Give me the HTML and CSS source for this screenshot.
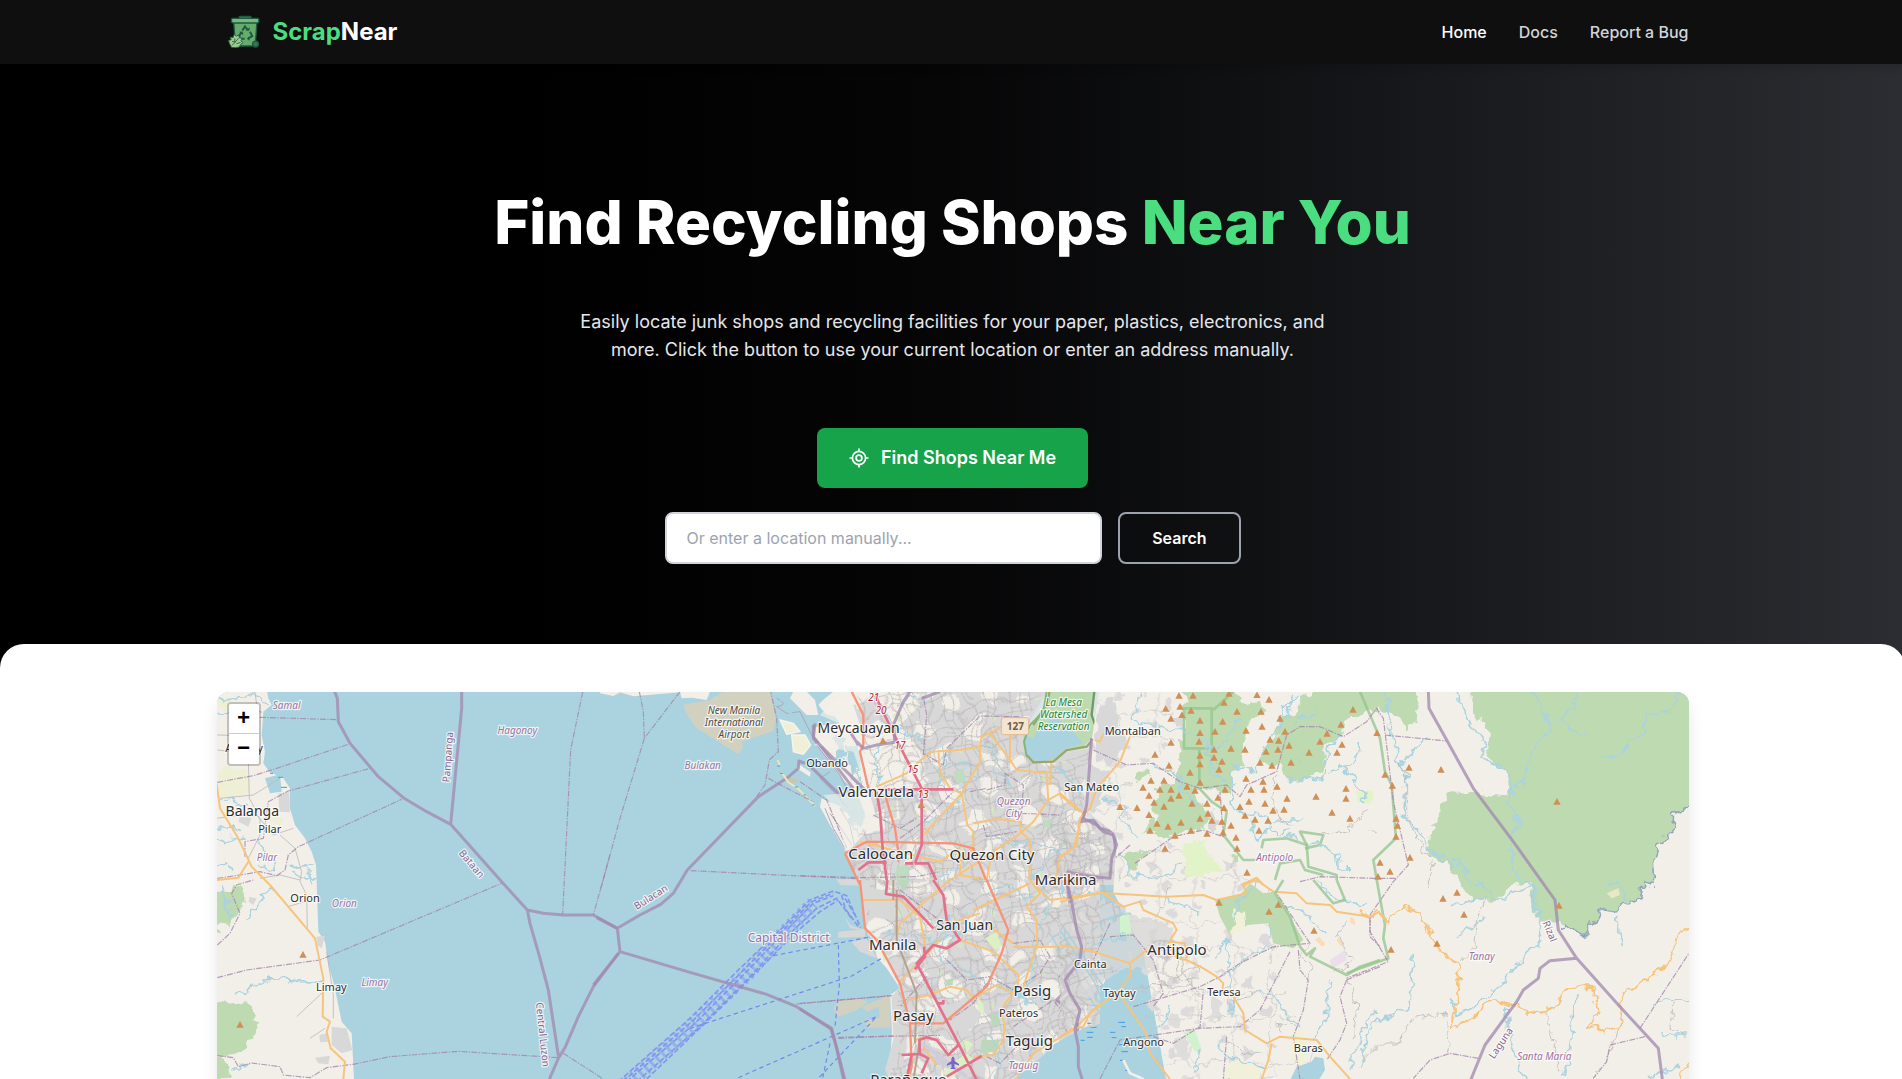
FILE: index.html
```html
<!DOCTYPE html>
<html lang="en">
<head>
<meta charset="utf-8">
<title>ScrapNear</title>
<link rel="stylesheet" href="styles.css">
</head>
<body>
<div class="page">
<header class="header">
  <div class="container header-row">
    <a class="brand">
      <svg class="brand-icon" viewBox="0 0 96 100">
        <g stroke="#1d5a3e" stroke-width="4" stroke-linejoin="round">
          <path d="M34 11V4h35v7" fill="#347a50"/>
          <path d="M17 24h70l-5 70H22z" fill="#65ac6d"/>
          <rect x="10" y="10" width="83" height="14" rx="4" fill="#78b87c"/>
          <circle cx="83" cy="88" r="9" fill="#39774e"/>
        </g>
        <g fill="none" stroke="#1d5a3e" stroke-width="6">
          <path d="M43 47l8-12 8 10M66 51l7 13-12 7M50 72H37l-4-8 7-11"/>
        </g>
        <path d="M53 47l11 1 2-11zM62 65l-5 8 9 5zM33 51l11-1 2 11z" fill="#1d5a3e"/>
        <path d="M4 86l-3-9 8-2-3-8 9 1 3-9 8 5 6-4 2 9 8 1-3 8 6 6-7 5-4 8-12 2-12-1z" fill="#9ccb8e" stroke="#285f42" stroke-width="3"/>
        <path d="M12 92l20-22M20 71v12M12 80l10 2M25 87l13-4" fill="none" stroke="#346c48" stroke-width="3"/>
      </svg>
      <span class="brand-name"><span class="accent">Scrap</span>Near</span>
    </a>
    <nav class="nav"><a class="active">Home</a><a>Docs</a><a>Report a Bug</a></nav>
  </div>
</header>
<section class="hero">
  <h1>Find Recycling Shops <span class="accent">Near You</span></h1>
  <p>Easily locate junk shops and recycling facilities for your paper, plastics, electronics, and more. Click the button to use your current location or enter an address manually.</p>
  <button class="find">
    <svg viewBox="0 0 20 20" width="20" height="20" fill="none" stroke="#fff" stroke-width="1.7"><circle cx="10" cy="10" r="6.6"/><circle cx="10" cy="10" r="2.9"/><path d="M10 .5v3.2M10 16.3v3.2M.5 10h3.2M16.3 10h3.2"/></svg>
    Find Shops Near Me
  </button>
  <form class="search"><input type="text" placeholder="Or enter a location manually..."><button type="button">Search</button></form>
</section>
<main class="content">
<div class="container">
<div class="map">
<svg class="map-canvas" viewBox="217 692 1472 408" width="1472" height="408">
<defs>
  <path id="peak" d="M0-11L11 9H-11z" fill="#d08f55"/>
  <filter id="wiggle" x="-5%" y="-5%" width="110%" height="110%" color-interpolation-filters="sRGB">
    <feTurbulence type="fractalNoise" baseFrequency=".035" numOctaves="2" seed="4"/>
    <feDisplacementMap in="SourceGraphic" scale="38" xChannelSelector="R" yChannelSelector="G"/>
  </filter>
  <filter id="bend" x="-5%" y="-5%" width="110%" height="110%" color-interpolation-filters="sRGB">
    <feTurbulence type="fractalNoise" baseFrequency=".012" numOctaves="2" seed="9"/>
    <feDisplacementMap in="SourceGraphic" scale="75" xChannelSelector="R" yChannelSelector="G"/>
  </filter>
  <pattern id="streets" width="190" height="170" patternUnits="userSpaceOnUse" patternTransform="rotate(-14)">
    <path d="M0 22L48 16 95 27 143 15 190 22M0 60L55 64 100 55 190 60M0 98L40 90 92 101 190 98M0 138L63 132 122 143 190 138M22 0L28 60 19 101 22 170M60 0L55 64 63 132 60 170M96 0L100 55 91 101 96 170M139 0L143 60 132 98 139 170M170 0L164 60 170 98 165 138 170 170M28 40L55 42M100 78H135M63 115L92 118M143 36H168M132 118L165 121M0 80H24M77 20V60M115 55V100M45 92V134M110 141V170M152 98V138" fill="none" stroke="#b9b6b6" stroke-width="2.6"/>
  </pattern>
  <pattern id="blocks" width="310" height="270" patternUnits="userSpaceOnUse">
    <path d="M20 8L60 0 74 30 50 44 22 35zM120 40L165 30 180 70 140 84 110 70zM230 10L285 20 270 60 225 50zM35 100L85 90 95 130 60 152 28 138zM190 110L240 104 260 150 210 168 178 150zM95 190L145 180 155 225 118 248 85 225zM250 200L300 194 290 240 255 250zM10 210L45 200 50 240 16 250z" fill="#f2efe9"/>
    <path d="M100 10l18 4-6 16-16-3zM272 92l20 6-8 18-16-8zM170 205l16 4-4 14-16-2z" fill="#d5e8c6"/>
  </pattern>
  <pattern id="scatter" width="230" height="210" patternUnits="userSpaceOnUse">
    <path d="M10 15l20-8 12 14-16 12zM90 45l24-5 8 24-22 9-14-10zM170 20l22 8-4 14-20-3zM30 110l28-8 10 30-26 12zM140 120l36 6-10 28-28-6zM70 180l20-8 16 12-18 16zM195 170l18 3-3 18-18-4z" fill="#dcdada"/>
    <path d="M0 80L40 70 80 90 130 75 160 100 230 80M60 0L66 60 50 110 72 160 60 210M170 0L160 60 185 120 170 210M0 160L70 150 120 170 185 150 230 160" fill="none" stroke="#c4c1c1" stroke-width="2"/>
  </pattern>
</defs>
<rect x="217" y="692" width="1472" height="408" fill="#aad3df"/>

<!-- Bataan peninsula -->
<g transform="translate(210 685) scale(.33333)">
  <path class="land" d="M0 0H168L175 40 185 60 160 80 155 150 165 200 160 235 178 260 220 280 240 310 240 370 255 420 285 460 305 500 318 540 322 650 325 740 345 770 355 840 370 890 383 950 395 1010 425 1045 432 1182H0z"/>
  <path filter="url(#wiggle)" d="M20 260L60 250 120 260 118 330 30 340zM20 30L70 40 45 68 20 65zM170 380L215 400 210 430 180 410z" fill="#eef0d5"/>
  <path class="wood" filter="url(#wiggle)" d="M0 620L60 620 65 598 100 605 104 650 88 680 60 720 0 712zM0 945L60 960 110 952 132 985 125 1010 146 1020 128 1060 100 1090 70 1110 0 1115zM0 1115L50 1120 62 1182H0zM0 720L35 740 0 760z"/>
  <path class="urban" d="M205 325L238 322 240 382 208 380zM365 1025L410 1030 427 1095 395 1105 365 1080zM328 1050L350 1045 355 1070 330 1072zM315 1118L360 1112 355 1138 325 1135zM320 755L345 752 335 790 320 780zM90 395L125 398 115 425 85 410zM118 635L140 640 130 660 116 650z"/>
  <path class="water" d="M165 280L210 268 215 320 180 325z"/>
  <path class="river" filter="url(#wiggle)" d="M22 38Q60 50 90 38T150 40L175 60M22 90L60 78 150 75M22 350L60 340 80 360 115 350M22 430L60 425 90 440M22 470L70 460 110 470M150 460L160 500 150 540 190 560 185 520M22 540L50 530 65 560M35 600L50 640 60 710M240 550L315 535M250 565L318 590M285 545L305 600M100 710L135 680 160 640 150 620 200 620M72 930L110 915 160 885 225 880 270 890 345 892M70 1155L120 1135"/>
  <path class="street" d="M22 150L110 152 115 230 118 340 140 380M22 195L70 200 110 220M120 35L135 20 140 60M30 340L130 330 210 280M115 520L150 450 150 400 120 370M210 450L255 490 275 560 270 590 290 630 292 730M150 580L210 570 270 585M260 995L340 920M300 1060L345 1030M350 800L370 930 370 1000M235 665L300 645M140 390L190 450 250 430M20 400L90 390 150 395"/>
  <path class="muni" d="M22 292L130 272 200 250 415 178M150 97L385 104M105 515L105 470 160 460 175 350 235 318 480 250M22 580L90 570 150 560 200 572 225 555 235 510 265 485 575 343M22 780L60 745 90 685 65 625 80 600 130 585M22 878L110 855 330 825 875 595M22 1112L70 1118 85 1145 125 1134 210 1145 220 1170 300 1178 350 1148 430 1138 540 1115 745 1099 1045 1118M1118 21L1082 195 1058 688M1200 510L1150 690M1060 1105L1180 1182"/>
  <path class="secondary" d="M20 295L30 370 85 460 125 545 180 600 315 760 340 880 338 995 360 1010 350 1040 362 1090 405 1130 400 1182M20 585L85 578 115 530"/>
  <path class="region" d="M372 15L382 40 385 110 420 175 505 275 580 338 650 380 722 418 875 590 952 675M755 15L755 70 722 418M952 675L1000 685 1060 690 1150 690 1222 730M952 675L960 715 990 820 1015 915 1046 1118 1015 1190M1046 1118L1065 1088 1105 995 1150 905 1225 805"/>
  <path class="marsh" d="M180 265h9M204 277h15M213 307h18"/>
  <use href="#peak" x="279" y="809"/><use href="#peak" x="90" y="1019"/>
</g>

<!-- Manila Bay shore -->
<g transform="translate(600 685) scale(.33333)">
  <path class="land" d="M0 0V25L40 33 60 22 100 34 240 22 245 40 275 38 320 45 330 20H700L650 60 665 85 705 95 720 115 675 120 640 128 635 160 690 230 735 290 770 320 800 400 790 440 740 370 710 360 665 340 660 365 690 420 735 495 775 560 790 640 795 720 820 760 830 815 860 850 900 910 870 930 876 1040 870 1130 890 1182H960V0z"/>
  <path d="M248 60L330 45 370 20H512L530 90 520 138 425 170 430 185 415 208 290 130 262 90z" fill="#d2d1c0"/>
  <path d="M700 970L720 945 770 940 805 950 770 975 715 995zM785 965L870 930 872 1028H800L795 1003 840 998 835 965 800 980z" fill="#d2d1c0"/>
  <path class="water" d="M512 20L690 20 655 60 680 90 640 125 630 180 690 245 735 320 690 345 640 280 625 240 590 225 540 220 530 100z"/>
  <path d="M540 105L580 115 600 140 560 148zM575 150L615 150 632 180 610 208 580 200z" fill="#f0f0d8" stroke="#f7f5ec" stroke-width="4"/>
  <path class="land" d="M580 20L620 20 645 45 655 90 620 90 570 40zM600 240L632 262 630 275 590 250z"/>
  <path d="M560 275L600 285 575 298z" fill="#c9c6a9"/>
  <path class="water" filter="url(#wiggle)" d="M740 180L775 175 785 240 760 270 745 230zM700 150L730 170 740 250 715 240zM720 300L755 360 770 420 750 400 710 330zM770 350L790 380 800 430 780 420z"/>
  <path class="shore" d="M530 40Q570 60 530 65L560 85 600 80 620 120 650 180 720 270 750 330M690 260L660 280 710 330 770 400M675 370L700 430 740 500 770 540M690 385L730 440 755 480M720 370L750 420 765 490"/>
  <path class="urban" d="M708 583L780 582 778 602 722 600zM732 690L750 720 790 735 750 730zM715 740L795 732 795 755 715 758zM755 772L800 760 830 820 780 800z"/>
  <path class="river" filter="url(#wiggle)" d="M700 160L740 210 760 280 790 320M720 290L745 380 760 400M760 240L800 340M735 340L780 420M740 380L790 470M800 90L790 200M840 30L800 60M515 30L560 48 575 90"/>
  <path class="muni" d="M118 20L130 80 133 160 240 20M133 160L60 400 0 620M470 335L495 300 508 225 535 200 530 100 512 20M600 290L680 345 740 490M272 557L785 582M590 957L900 930M715 1060L890 1052"/>
  <path class="ferry" d="M520 812L830 752M270 1030L755 873 845 820M715 780L718 900 705 1025M415 1178L830 995 655 1180M690 1075L668 1178"/>
  <g class="bundle">
    <path class="wake" d="M85 1195L290 1010 440 870 550 745 640 655"/>
    <path d="M55 1190L270 1000 410 860 540 735 630 645 700 618 740 632 782 728"/>
    <path d="M68 1190L280 1006 420 866 545 740 635 650 700 625"/>
    <path d="M80 1190L290 1010 430 870 550 745 640 655 700 632"/>
    <path d="M110 1190L300 1025 450 875 570 745 650 670 710 640 755 700"/>
    <path d="M140 1182L320 1010 470 860 590 740 660 680 715 645"/>
    <path d="M725 630L735 670 775 725M735 640L765 690"/>
  </g>
  <path class="region" d="M-10 698L52 730 60 800 -20 900M52 730L120 690 182 658 220 625 262 555 475 335 560 280 595 250 597 228 615 235M60 800L270 862 500 928 590 965 693 1032 710 1090 732 1190M640 120L640 155 760 310M632 245L725 335"/>
  <path d="M533 225l8 20M545 262l20 30 30 20 40 40 10 12" fill="none" stroke="#e6e8b8" stroke-width="6"/>
  <path class="marsh" d="M532 243h10M540 265h10M584 306h10M610 330h8M636 360h8"/>
</g>

<!-- Metro Manila north -->
<g transform="translate(800 685) scale(.33333)">
  <path class="land" d="M130 20H940V600H180L140 520 120 430 100 360 70 330 200 320 160 200 40 180 150 130 60 90z" opacity=".65"/>
  <path class="urban" d="M400 20H740L700 90 670 150 680 200 720 235 800 200 880 190 890 340 860 400 940 410 960 600H190L135 510 180 460 220 420 300 400 290 330 360 300 370 210 300 120 340 80z"/>
  <path class="urban" d="M160 60L240 40 280 120 230 180 190 150zM210 330L290 310 290 400 230 400z"/>
  <path fill="url(#blocks)" filter="url(#bend)" d="M160 20H740L670 150 720 235 880 190 890 340 960 600H190L200 300z"/>
  <path fill="url(#streets)" filter="url(#bend)" d="M175 -20H740L670 150 720 235 880 190 890 340 860 400 940 410 960 620H190L145 510 210 420 200 200z"/>
  <path class="wood" d="M745 20H885L875 90 885 150 850 185 800 190 760 225 690 225 670 180 700 110 735 80z"/>
  <path class="water" d="M740 120L760 90 810 130 850 175 800 190 760 225 700 235 675 200 670 150 700 160 720 120z"/>
  <path d="M460 260L490 250 498 290 470 295zM290 545L325 540 330 575 310 600 285 590zM730 405h22v22h-22z" fill="#bfdcc2"/>
  <path class="river" filter="url(#wiggle)" d="M290 70L340 35 380 50M240 180L220 240 250 300M430 180L440 240 480 230 520 260 540 290M560 170L590 220 580 260M370 420L440 380 480 340M400 590L460 550 470 500M700 580L760 500 800 480M150 560L90 430M230 30L250 80 290 130 370 160M560 440L640 480 700 470 780 500M640 300L590 260M760 240L800 270 840 330M450 200L410 260 430 300 480 320"/>
  <path class="muni" d="M370 210L380 90 370 35M370 205L430 240 440 190 540 93 660 95 690 110M560 315L615 300 615 265 670 300 665 385 780 390M510 320L560 310M300 460L370 410 460 320M0 572L180 578 350 575 420 560M550 420L560 455 650 440M-95 280L-20 320 40 350M220 390L300 430 350 400"/>
  <path class="secondary" d="M230 305L320 265 390 200 480 195 540 185 545 155 600 130M415 195L420 260 450 310 485 325 540 230 540 185M485 325L370 450M485 325L502 420 520 440 520 500M570 145L630 225 650 255 740 265 745 345 700 410 655 450 580 500M630 130V235M520 415L590 402 660 410 662 440 690 465 688 600M745 345L780 325 850 385 820 490 780 515 765 600M520 490L480 530 480 570 560 585 570 530M430 600L520 540 600 500M750 300L755 220M180 470L300 500 420 530 480 490"/>
  <path class="trunk" d="M155 20L190 90 190 180 180 200 205 310M255 330L285 430 295 500 295 530M135 505L200 470 460 475 520 490 560 590M135 505L180 600"/>
  <path class="motorway" d="M225 30L290 165 365 310 365 480 345 535M235 313L460 313M230 320L240 380 248 490 262 600M345 535L385 535 415 600M175 555L205 532 260 532M340 535L315 535"/>
  <path class="region" d="M45 115L40 160 200 320M170 170L190 190 230 180 285 172 280 120 310 50 330 20M365 40L420 20M150 140L175 180M875 160L860 370 840 410 880 405 900 430 940 440 960 600"/>
  <path d="M748 20L745 50 700 120M680 210L700 232 760 230 800 195 860 185 885 155" fill="none" stroke="#9aa86b" stroke-width="7"/>
  <path d="M740 20L730 80 690 120 672 170 680 215" fill="none" stroke="#7fb879" stroke-width="6"/>
  <path d="M883 20L875 90 890 135" fill="none" stroke="#6f9a6a" stroke-width="7"/>
  <use href="#peak" x="249" y="168"/><use href="#peak" x="364" y="360"/>
  <rect x="604" y="98" width="82" height="51" rx="7" fill="#f5e5d0" stroke="#ddb98f" stroke-width="3"/>
</g>

<!-- Metro Manila south -->
<g transform="translate(800 880) scale(.33333)">
  <path class="urban" d="M180 0L190 130 240 200 300 320 275 350 280 480 255 570 300 660H640L700 550 800 470 900 430V0z"/>
  <path fill="url(#blocks)" filter="url(#bend)" d="M200 0L210 130 260 200 315 320 295 350 300 480 280 570 320 660H640L700 550 800 460 900 420V0z"/>
  <path fill="url(#streets)" filter="url(#bend)" d="M200 0L210 130 260 200 315 320 295 350 300 480 280 570 320 660H640L690 540 800 455 900 415V0z"/>
  <path class="urban" d="M415 380L500 360 545 400 520 445 450 455 410 430zM200 20L290 40 280 120 210 110z"/>
  <path d="M555 175L590 155 605 200 585 210zM530 350L550 370 552 400 535 390zM490 480L520 490 500 520zM470 540L500 520 520 540 460 590 425 580zM245 215L270 230 250 245z" fill="#dcf0c4"/>
  <path d="M290 0L330 0 310 35zM435 300L460 295 458 315 438 318zM572 400L600 400 598 435 575 440zM545 480L600 480 590 515 540 520z" fill="#bcd8bc"/>
  <path d="M365 490L500 590M350 510L450 560" stroke="#cfcddb" stroke-width="12"/>
  <path class="river" filter="url(#wiggle)" d="M430 60L450 130 480 160 400 190 380 210M250 160L330 165 400 180 440 170 410 230 490 270 560 310 640 330 700 380M730 0L740 100 700 200 700 280 680 320 740 360M560 40L620 10 700 60M540 450L600 500 590 597M780 0L800 60 830 100M860 30L900 70"/>
  <path class="river" d="M750 160L800 250 900 400M775 160L900 370"/>
  <path class="muni" d="M300 30L430 130M640 190L720 180 750 230 720 280 640 330 570 290 500 300 430 230M560 310L520 370 450 420M640 440L760 360 790 400 800 460M380 290L300 380M0 370L270 347M115 472L420 466M560 530L600 550 650 500"/>
  <path class="secondary" d="M190 60H300L360 110 375 200M450 0L300 130 290 170M540 100L450 130 480 180 580 215 655 285 655 320M520 90L690 10M690 0L720 40 680 80 710 120 712 195 670 320M640 200L820 200 900 215M325 360L390 345 450 320 500 330 520 355 590 315 640 340 615 370 600 400 615 430 610 480 580 525 520 530M750 60L900 40M710 20L750 60M820 450L750 490 700 520 650 597M820 450L900 370M380 470L345 480M300 305L420 180M370 500L410 555M570 140L640 190"/>
  <path class="trunk" d="M180 0L195 145 230 180 300 310 330 430 335 560 325 600M560 0L625 150 605 220 560 320 430 430 330 430"/>
  <path d="M290 30V180L350 340 345 490M280 0V60M340 600L360 480" fill="none" stroke="#b4a28f" stroke-width="6"/>
  <path class="motorway" d="M262 0L258 42 310 50 400 145M400 0L430 45 440 120 480 180 440 205 400 195 350 250 480 500 530 600M345 268L375 230 372 200M305 525L360 522 385 535 365 580M360 525L358 480 380 472 410 480 445 525 475 495M440 590L545 528M410 370H430V360M320 597L335 525"/>
  <path class="region" d="M800 0L815 110 845 170 840 220 780 290 800 330 770 360 830 410 835 480 830 560 850 620M0 387L95 445 135 600"/>
  <path d="M459 530c5 0 5 8 5 13l13 9v5l-13-5-1 10 5 5h-18l5-5-1-10-13 5v-5l13-9c0-5 0-13 5-13z" fill="#7b68c4"/>
</g>

<!-- Rizal highlands -->
<g transform="translate(1060 685) scale(.33333)">
  <path class="land" d="M120 0H2000V1250H330L250 800 160 620 170 450 70 370 90 200z"/>
  <path fill="url(#scatter)" filter="url(#wiggle)" d="M120 20H330L360 160 230 260 200 440 330 480 520 520 640 620 660 900 800 1180H250L180 640 170 450 70 370 90 200z"/>
  <path class="urban" filter="url(#wiggle)" d="M115 60L160 30 170 100 200 180 160 240 100 230zM80 240L150 260 110 380 70 380zM340 100L370 100 370 130 345 120zM430 380L460 375 480 420 450 440z"/>
  <path fill="url(#streets)" filter="url(#bend)" d="M-20 400L130 430 160 450 170 480 150 580 0 600z"/>
  <g filter="url(#wiggle)">
    <path class="wood" d="M372 0H510L555 60 600 45 610 90 570 110 550 190 555 240 520 250 510 330 480 320 440 305 400 320 445 390 430 430 340 445 330 470 285 445 250 445 290 395 270 360 300 340 280 310 350 295 360 190 375 120z"/>
    <path class="wood" d="M780 0H950L955 90 930 75 850 110 840 155 790 190 795 250 720 290 680 280 665 240 630 245 600 225 605 190 650 160 660 100 700 95 720 50z"/>
    <path class="wood" d="M980 0H1080L1070 100 1040 140 1020 90 980 90 950 60 900 0zM225 275L265 250 270 275 230 285zM180 510L270 490 220 560zM515 510L535 512 530 540 515 535zM1225 0H1910L1900 350 1870 370 1840 390 1840 440 1790 480 1780 540 1785 600 1750 590 1740 650 1690 650 1660 680 1620 670 1605 710 1570 750 1540 730 1515 720 1430 700 1410 590 1360 600 1300 650 1240 650 1200 590 1160 530 1100 510 1125 400 1160 330 1230 320 1345 335 1350 270 1280 210 1290 140 1240 80z"/>
  </g>
  <path filter="url(#wiggle)" d="M365 490L400 460 440 470 430 500 500 560 440 555 430 580 375 580 380 540zM880 325L940 320 930 350 900 350z" fill="#e2f3c8"/>
  <path d="M372 70H455V190H372zM418 190V300M418 310L455 350 500 380 490 450 550 525 590 525M520 20L460 75M605 490L610 465 680 460 740 480 720 440 790 450 780 480 735 490M900 20L960 160 975 260 995 300 1008 460 940 525 960 640 975 720 970 760 985 820 860 865" class="park"/>
  <path class="river" filter="url(#wiggle)" d="M300 130L360 130 430 170 470 200 545 90M440 160L455 230 490 290 530 300M510 240L590 260 600 210 680 100 700 20M515 260L520 360 545 380 590 390 620 400 640 420 590 470 570 410M640 405H730M690 430L650 450 630 420M795 255L780 285 740 275 715 295 680 280M795 250L800 200 850 140M810 265L840 250 870 265 900 300 915 355M835 255L880 240 900 190 905 170M730 470L790 480 830 510 835 550 870 548M680 450L720 465M280 240L340 260 370 290 360 320 420 360M240 20L220 100 290 130 290 110M130 340L200 370 180 400 240 460M170 500L210 540 200 570 270 580 330 570 360 530M480 280L450 270 455 220M660 130L670 60 720 40M700 110L770 80M710 210L725 240M975 20L985 120 1010 180 1010 230 1040 270 1030 400 1080 440 1110 500 1180 540 1190 515 1230 590 1290 610 1300 650 1380 615 1420 600 1430 680 1450 760 1400 800 1370 840 1330 890 1240 970 1190 985 1170 940M1190 20L1220 100 1280 180 1260 220 1300 230 1350 270 1360 320 1345 360 1380 420 1350 460 1360 560 1400 590 1430 620M1420 20L1470 130 1410 210 1390 290 1350 320M1550 20L1540 70 1500 100 1560 150 1590 152M1860 20L1820 80 1760 90 1755 150 1710 160 1680 215 1630 210M1020 240L1100 155M1170 665L1280 640M1190 755L1270 700M1640 590L1690 610 1695 640M1670 690L1690 780M1060 810L1050 960 1010 990 940 1010 920 1060 900 1150M1560 935L1540 960 1530 1080 1510 1180M1340 970L1350 1080 1400 1180M1780 960L1840 940 1890 960M1800 1050L1880 1050M1760 1180L1860 1140"/>
  <path class="street" filter="url(#wiggle)" d="M650 260L640 360 660 400 700 420M790 450L870 430 920 370M440 200L480 230M920 435L950 440M1015 230L1040 290 1040 400 1100 510 1120 520 1100 610M1280 640L1250 700 1240 790 1200 830M900 1130L950 1080 1010 1080 1060 1000 1150 985 1170 1110M1500 950L1460 980 1480 1060 1500 1160M1680 1000L1660 1080 1600 1180M1840 950L1830 1030 1880 1060"/>
  <path class="muni" d="M100 195L200 240 280 235 360 290 420 310 500 300 540 335 560 300 650 260 680 150 720 125 780 125 850 155 920 110 950 70 970 100 1000 350 1045 540 1000 590 930 690 930 740 985 830 860 880M975 150L1160 168M225 535L340 455 430 435 490 455 480 320M720 590L780 575 940 580 1010 580M1740 1030L1890 800M1755 1055L1650 1080 1640 1130 1600 1180M1255 1120L1170 1105 1110 1125 1060 1180M210 480L165 520"/>
  <path filter="url(#wiggle)" d="M1900 340L1870 370 1840 390 1840 440 1790 480 1780 540 1785 600 1750 590 1740 650 1690 650 1660 680 1620 670 1605 710 1570 750 1540 730 1515 720 1495 735" fill="none" stroke="#92a5bd" stroke-width="5"/>
  <path class="secondary" d="M210 155L180 230 110 310 90 370 60 400 50 480 0 520M105 165L120 170 130 145M0 330L60 380M545 600L590 578 610 600"/>
  <path class="secondary" filter="url(#wiggle)" d="M900 680L920 695 960 680 980 710 1030 665 1075 685 1110 740 1145 800 1190 835 1200 900 1170 1030 1230 1010 1290 950 1370 960 1410 990 1480 970 1520 910 1600 905 1610 980 1590 1020 1640 1040 1680 1020 1690 930 1750 890 1830 830 1850 750 1900 725M1900 1130L1860 1160 1870 1190"/>
  <path class="region" d="M1105 15L1107 70 1160 165 1240 310 1360 470 1485 645 1495 735 1550 820 1680 965 1795 1090 1808 1190M1550 820L1470 827 1440 850 1435 880 1390 915 1370 950 1275 1080 1230 1190M95 160L80 360 70 400 110 420 130 440 160 450 170 480 155 520 150 580 100 575 20 560"/>
  <path d="M1640 625L1675 610 1680 630 1655 640z" fill="#e8e8c8"/>
  <g>
    <use href="#peak" x="357" y="32"/><use href="#peak" x="399" y="32"/><use href="#peak" x="507" y="26"/><use href="#peak" x="591" y="30"/><use href="#peak" x="627" y="44"/><use href="#peak" x="492" y="53"/><use href="#peak" x="317" y="71"/><use href="#peak" x="360" y="65"/><use href="#peak" x="393" y="77"/><use href="#peak" x="366" y="90"/><use href="#peak" x="333" y="101"/><use href="#peak" x="531" y="80"/><use href="#peak" x="603" y="80"/><use href="#peak" x="879" y="74"/><use href="#peak" x="420" y="107"/><use href="#peak" x="488" y="110"/><use href="#peak" x="660" y="101"/><use href="#peak" x="606" y="125"/><use href="#peak" x="843" y="119"/><use href="#peak" x="420" y="144"/><use href="#peak" x="465" y="140"/><use href="#peak" x="558" y="137"/><use href="#peak" x="675" y="140"/><use href="#peak" x="801" y="146"/><use href="#peak" x="951" y="144"/><use href="#peak" x="333" y="173"/><use href="#peak" x="417" y="170"/><use href="#peak" x="630" y="164"/><use href="#peak" x="656" y="167"/><use href="#peak" x="687" y="182"/><use href="#peak" x="780" y="170"/><use href="#peak" x="846" y="179"/><use href="#peak" x="285" y="209"/><use href="#peak" x="420" y="212"/><use href="#peak" x="462" y="194"/><use href="#peak" x="513" y="191"/><use href="#peak" x="555" y="194"/><use href="#peak" x="618" y="200"/><use href="#peak" x="654" y="194"/><use href="#peak" x="747" y="203"/><use href="#peak" x="831" y="203"/><use href="#peak" x="327" y="242"/><use href="#peak" x="420" y="238"/><use href="#peak" x="462" y="218"/><use href="#peak" x="486" y="230"/><use href="#peak" x="600" y="233"/><use href="#peak" x="636" y="242"/><use href="#peak" x="693" y="233"/><use href="#peak" x="390" y="263"/><use href="#peak" x="477" y="254"/><use href="#peak" x="273" y="287"/><use href="#peak" x="312" y="287"/><use href="#peak" x="420" y="293"/><use href="#peak" x="558" y="281"/><use href="#peak" x="609" y="290"/><use href="#peak" x="249" y="308"/><use href="#peak" x="300" y="314"/><use href="#peak" x="333" y="314"/><use href="#peak" x="381" y="305"/><use href="#peak" x="405" y="317"/><use href="#peak" x="495" y="314"/><use href="#peak" x="573" y="314"/><use href="#peak" x="612" y="314"/><use href="#peak" x="651" y="305"/><use href="#peak" x="858" y="311"/><use href="#peak" x="267" y="332"/><use href="#peak" x="333" y="341"/><use href="#peak" x="357" y="332"/><use href="#peak" x="474" y="338"/><use href="#peak" x="681" y="341"/><use href="#peak" x="768" y="335"/><use href="#peak" x="858" y="341"/><use href="#peak" x="180" y="366"/><use href="#peak" x="231" y="369"/><use href="#peak" x="282" y="353"/><use href="#peak" x="312" y="365"/><use href="#peak" x="396" y="356"/><use href="#peak" x="441" y="356"/><use href="#peak" x="567" y="350"/><use href="#peak" x="615" y="356"/><use href="#peak" x="492" y="369"/><use href="#peak" x="540" y="366"/><use href="#peak" x="639" y="377"/><use href="#peak" x="672" y="374"/><use href="#peak" x="816" y="383"/><use href="#peak" x="267" y="390"/><use href="#peak" x="444" y="386"/><use href="#peak" x="555" y="392"/><use href="#peak" x="870" y="401"/><use href="#peak" x="291" y="416"/><use href="#peak" x="324" y="425"/><use href="#peak" x="363" y="413"/><use href="#peak" x="420" y="401"/><use href="#peak" x="456" y="407"/><use href="#peak" x="486" y="410"/><use href="#peak" x="585" y="404"/><use href="#peak" x="624" y="407"/><use href="#peak" x="513" y="422"/><use href="#peak" x="270" y="437"/><use href="#peak" x="345" y="452"/><use href="#peak" x="393" y="437"/><use href="#peak" x="441" y="446"/><use href="#peak" x="489" y="443"/><use href="#peak" x="528" y="458"/><use href="#peak" x="597" y="437"/><use href="#peak" x="315" y="491"/><use href="#peak" x="531" y="491"/><use href="#peak" x="561" y="563"/>
    <use href="#peak" x="975" y="269"/><use href="#peak" x="997" y="302"/><use href="#peak" x="1008" y="401"/><use href="#peak" x="1012" y="422"/><use href="#peak" x="1008" y="455"/><use href="#peak" x="960" y="533"/><use href="#peak" x="990" y="560"/><use href="#peak" x="954" y="575"/><use href="#peak" x="1050" y="518"/><use href="#peak" x="1047" y="248"/><use href="#peak" x="1143" y="254"/><use href="#peak" x="1491" y="350"/><use href="#peak" x="1497" y="662"/><use href="#peak" x="1191" y="623"/><use href="#peak" x="1149" y="641"/><use href="#peak" x="1212" y="689"/><use href="#peak" x="1131" y="776"/><use href="#peak" x="993" y="794"/>
  </g>
</g>

<!-- Antipolo and Laguna Lake -->
<g transform="translate(1060 880) scale(.33333)">
  <path class="urban" filter="url(#wiggle)" d="M0 70L120 50 220 100 340 140 330 220 280 230 300 280 200 260 100 320 60 420 0 460zM330 400L365 410 360 440 325 430zM450 350L490 370 475 420 455 410zM340 480L385 470 385 540 345 530z" opacity=".75"/>
  <path fill="url(#streets)" filter="url(#bend)" d="M0 70L120 50 200 90 130 160 120 240 200 260 100 320 60 420 0 460zM250 200L330 170 420 260 400 330 340 300 280 230z"/>
  <path class="wood" d="M465 60L540 45 570 10 610 40 640 35 690 110 730 180 700 205 640 190 625 130 560 135 510 165 480 110z"/>
  <path d="M180 110L205 95 215 160 180 165zM370 455L405 450 425 510 405 515z" fill="#d0f2cd"/>
  <path filter="url(#wiggle)" d="M520 95L555 85 560 150 520 160zM500 560L560 540 620 560 600 600H490zM690 460L720 450 750 520 720 560 700 530z" fill="#f0f1d8"/>
  <path d="M810 240L855 210 860 240 815 268z" fill="#eadfea"/>
  <path d="M765 180l12-10 20 22-10 8zM835 170l18 20-8 10-15-18zM870 110l12 5 4 20-14-5z" fill="#fbdcb5"/>
  <path class="water" d="M-150 660L-120 580 -60 550 -30 500 30 465 80 440 130 440 170 490 200 500 240 520 270 530 330 610 340 660zM690 600L710 560 755 545 765 530 790 535 795 570 770 610z"/>
  <path class="river" d="M0 150L100 300 180 480M10 140L150 350 200 500"/>
  <path class="river" filter="url(#wiggle)" d="M100 150L130 120 220 100M90 190L200 170M320 60L410 95M470 230L500 170 510 290 510 400 530 350M520 270L560 230 640 200M590 10L540 60 520 140M680 80L740 100 790 150M630 120V170M770 0L830 60 920 70M600 330L650 350 690 420 720 440M810 300L800 350 800 420 760 480M960 400H930L910 450 870 560M280 460L320 420 330 370M490 470L470 500 520 540 620 560M400 590L420 510"/>
  <path class="street" filter="url(#wiggle)" d="M330 20L310 80 290 110M350 230L360 290 420 340M600 330L570 350 520 360M760 190L720 230 760 260 740 300M860 120L830 170 880 240 830 280M860 300L890 380 880 480M700 440L650 430 670 460M500 480L560 520 610 520M180 340L220 330 290 310 440 330"/>
  <path class="muni" d="M150 170L220 165 280 240 310 340 280 380M220 380L420 320 480 290 540 250 640 200 750 190 650 40M690 215L600 390 540 440 420 445 430 330M715 210L720 270 745 300 730 390 700 470 720 597M860 300L840 350 860 430 840 480 800 540M960 260L860 300M120 597L180 480 420 445M280 470L340 490 420 440M500 470L490 597M150 130L100 240M930 110L930 170 960 200"/>
  <path class="secondary" d="M0 65L120 38 320 50 430 45 470 60 560 40 550 15 590 0 640 35 710 40 740 70 810 75 830 95 930 110 960 95M130 40L190 80 240 65 250 90 340 130 350 150 325 190 350 235 380 240 430 265 470 290 490 310 485 340M0 195L100 215 210 250 212 285 180 330 90 400 70 440 40 445 0 470M210 250L260 210M180 345L260 460 270 520 330 597M330 185L375 190 380 235M520 350L550 400 555 450 620 490 660 470 770 480 810 530 870 597M635 490L625 540 605 597"/>
  <path class="park" d="M830 0L855 60 820 70 760 0M670 0L645 40 690 110 720 200 740 225 765 205 750 230 860 285 900 260 960 240M645 0L660 -50 720 -60 735 -30 790 -15 M740 -110L745 -40 830 -15V0"/>
  <path class="region" d="M20 0L35 65 50 150 65 200 60 240 15 300 30 340 60 390 45 450 55 500 55 560 70 610"/>
  <path class="marsh" d="M82 430h12M92 442h18M80 457h20M82 472h16M62 481h12M175 427h20M184 440h14M150 457h16M155 473h14M176 494h12M184 515h20M180 541h12M196 571h14"/>
  <path d="M190 540l20 40 40 17" fill="none" stroke="#f2efe9" stroke-width="8"/>
  <use href="#peak" x="477" y="68"/><use href="#peak" x="655" y="74"/><use href="#peak" x="627" y="95"/><use href="#peak" x="762" y="152"/>
</g>

<g class="labels" transform="translate(210 685) scale(.33333)">
  <g class="admin"><text x="230" y="73">Samal</text><text x="922" y="146">Hagonoy</text><text x="171" y="529">Pilar</text><text x="403" y="666">Orion</text><text x="494" y="902">Limay</text></g>
  <g class="adminline"><text transform="translate(724 217) rotate(-86)">Pampanga</text><text transform="translate(777 543) rotate(50)">Bataan</text><text transform="translate(988 1050) rotate(84)">Central Luzon</text></g>
  <text class="small" x="102" y="202">Abucay</text><text class="town" x="127" y="393">Balanga</text><text class="small" x="179" y="445">Pilar</text><text class="small" x="285" y="651">Orion</text><text class="small" x="364" y="917">Limay</text>
</g>
<g class="labels" transform="translate(600 685) scale(.33333)">
  <g class="airport"><text x="402" y="87">New Manila</text><text x="402" y="123">International</text><text x="402" y="159">Airport</text></g>
  <text class="adm" x="308" y="251">Bulakan</text><text class="district" x="566" y="771">Capital District</text>
  <g class="adminline"><text transform="translate(158 645) rotate(-32)">Bulacan</text></g>
  <text class="town" x="776" y="144">Meycauayan</text><text class="small" x="681" y="245">Obando</text>
</g>
<g class="labels" transform="translate(800 685) scale(.33333)">
  <g class="exit"><text x="221" y="48">21</text><text x="243" y="88">20</text><text x="300" y="192">17</text><text x="338" y="265">15</text><text x="369" y="339">13</text></g>
  <g class="reserve"><text x="791" y="63">La Mesa</text><text x="791" y="99">Watershed</text><text x="791" y="135">Reservation</text></g>
  <g class="adm"><text x="641" y="360">Quezon</text><text x="641" y="396">City</text></g>
  <text class="shield" x="646" y="134">127</text>
  <text class="city" x="229" y="337">Valenzuela</text><text class="city" x="242" y="521">Caloocan</text><text class="city" x="576" y="524">Quezon City</text><text class="city" x="797" y="600">Marikina</text>
</g>
<g class="labels" transform="translate(800 880) scale(.33333)">
  <text class="town" x="494" y="150">San Juan</text><text class="city" x="278" y="209">Manila</text><text class="city" x="697" y="347">Pasig</text><text class="small" x="656" y="411">Pateros</text><text class="city" x="340" y="422">Pasay</text><text class="city" x="688" y="499">Taguig</text><text class="adm" x="670" y="567">Taguig</text><text class="city" x="325" y="614">Parañaque</text>
</g>
<g class="labels" transform="translate(1060 685) scale(.33333)">
  <text class="small" x="218" y="150">Montalban</text><text class="small" x="95" y="318">San Mateo</text><text class="adm" x="644" y="528">Antipolo</text><text class="adm" x="1265" y="824">Tanay</text><text class="adm" x="1453" y="1125">Santa Maria</text>
  <g class="adminline"><text transform="translate(1460 743) rotate(68)">Rizal</text><text transform="translate(1331 1080) rotate(-56)">Laguna</text></g>
</g>
<g class="labels" transform="translate(1060 880) scale(.33333)">
  <text class="city" x="351" y="226">Antipolo</text><text class="small" x="91" y="263">Cainta</text><text class="small" x="178" y="350">Taytay</text><text class="small" x="492" y="348">Teresa</text><text class="small" x="251" y="498">Angono</text><text class="small" x="745" y="515">Baras</text>
</g>
</svg>
<div class="zoom"><button type="button">+</button><button type="button">−</button></div>
</div>
</div>
</main>
</div>
</body>
</html>
```
FILE: styles.css
```css
* { box-sizing: border-box; }
html, body { margin: 0; height: 100%; overflow: hidden; }
body { font-family: Inter, sans-serif; font-size: 16px; line-height: 24px; background: #fff; }
.page { width: 1905px; height: 100%; overflow: hidden; background: linear-gradient(to right, #000 0%, #000 28%, #060607 50%, #111214 67%, #2b2d32 100%); }
.container { width: 1536px; margin: 0 auto; padding: 0 32px; }
.accent { color: #4ade80; }
button, input { font: inherit; }

.header { height: 64px; background: #0f0f0f; box-shadow: 0 4px 6px rgba(0, 0, 0, .12); position: relative; }
.header-row { display: flex; justify-content: space-between; align-items: center; height: 64px; }
.brand { display: flex; align-items: center; gap: 13px; padding-left: 11px; }
.brand-icon { width: 32px; height: 33px; margin-top: -2px; }
.brand-name { color: #fff; font-size: 24px; font-weight: 700; line-height: 32px; }
.nav { display: flex; gap: 32px; font-weight: 500; color: #d1d5db; }
.nav .active { color: #fff; }

.hero { height: 580px; padding-top: 128px; display: flex; flex-direction: column; align-items: center; text-align: center; color: #fff; }
.hero h1 { margin: 0; font-size: 60px; line-height: 60px; font-weight: 800; }
.hero p { margin: 56px 0 0; width: 768px; font-size: 18px; line-height: 28px; color: #e5e7eb; }
.find { margin-top: 64px; height: 60px; padding: 0 32px; border: 0; border-radius: 8px; background: #16a34a; color: #fff; font-size: 18px; font-weight: 600; display: flex; align-items: center; gap: 12px; }
.search { margin: 24px 0 0; width: 576px; display: flex; gap: 16px; }
.search input { flex: 1; min-width: 0; height: 52px; padding: 0 20px; border: 2px solid #d1d5db; border-radius: 8px; background: #fff; }
.search input::placeholder { color: #9ca3af; opacity: 1; }
.search button { height: 52px; padding: 0 32px; border: 2px solid #9ca3af; border-radius: 8px; background: transparent; color: #fff; font-weight: 600; }

.content { height: 480px; padding-top: 48px; background: #fff; border-radius: 24px 24px 0 0; }
.map { position: relative; height: 408px; border-radius: 12px 12px 0 0; overflow: hidden; box-shadow: 0 10px 15px rgba(0, 0, 0, .1); }
.map-canvas { display: block; }
.zoom { position: absolute; left: 10px; top: 10px; border: 2px solid rgba(0, 0, 0, .2); border-radius: 4px; background-clip: padding-box; display: flex; flex-direction: column; }
.zoom button { width: 30px; height: 30px; padding: 0; border: 0; border-bottom: 1px solid #ccc; border-radius: 2px 2px 0 0; background: #fff; color: #000; font: 700 22px/32px "Liberation Mono", monospace; }
.zoom button:last-child { border-bottom: 0; border-radius: 0 0 2px 2px; }

.land { fill: #f2efe9; }
.wood { fill: #bedab1; }
.urban { fill: #d9d8d8; }
.water { fill: #aad3df; }
.river, .street, .shore, .muni, .secondary, .trunk, .motorway, .ferry, .marsh, .park { fill: none; stroke-linejoin: round; }
.river { stroke: #aad3df; stroke-width: 5; }
.street { stroke: #bcb9b8; stroke-width: 2.5; }
.shore { stroke: #a9a7b8; stroke-width: 3; }
.muni { stroke: #a585aa; stroke-width: 3.5; stroke-dasharray: 18 4 4 4; opacity: .8; }
.secondary { stroke: #f6c47c; stroke-width: 6; }
.trunk { stroke: #f6947a; stroke-width: 7; }
.motorway { stroke: #e4708a; stroke-width: 8; }
.region { fill: none; stroke: #a38bb0; stroke-width: 9; stroke-linejoin: round; opacity: .78; }
.park { stroke: #93c48c; stroke-width: 8; opacity: .75; }
.ferry { stroke: #7584ee; stroke-width: 3.5; stroke-dasharray: 13 10; }
.marsh { stroke: #3f9bf0; stroke-width: 3; }
.bundle { fill: none; stroke: #7a85f6; stroke-width: 5; stroke-dasharray: 16 7; opacity: .8; }
.bundle .wake { stroke-width: 44; stroke-dasharray: 9 13; opacity: .55; }

.labels { font-family: "Noto Sans", sans-serif; text-anchor: middle; fill: #2d2d2d; }
.labels text { paint-order: stroke; stroke: rgba(255, 255, 255, .75); stroke-width: 7px; stroke-linejoin: round; }
.city { font-size: 45px; }
.town { font-size: 42px; }
.small { font-size: 33px; }
.admin, .adm { font-size: 30px; font-style: italic; fill: #9b739f; }
.adminline { font-size: 30px; fill: #88638c; }
.district { font-size: 36px; fill: #9b739f; }
.airport { font-size: 30px; font-style: italic; fill: #4c4c44; }
.reserve { font-size: 30px; font-style: italic; fill: #24843c; }
.exit { font-size: 30px; font-style: italic; fill: #b02238; }
.labels .shield { font-size: 30px; font-weight: 700; fill: #705b45; stroke: none; }
```
